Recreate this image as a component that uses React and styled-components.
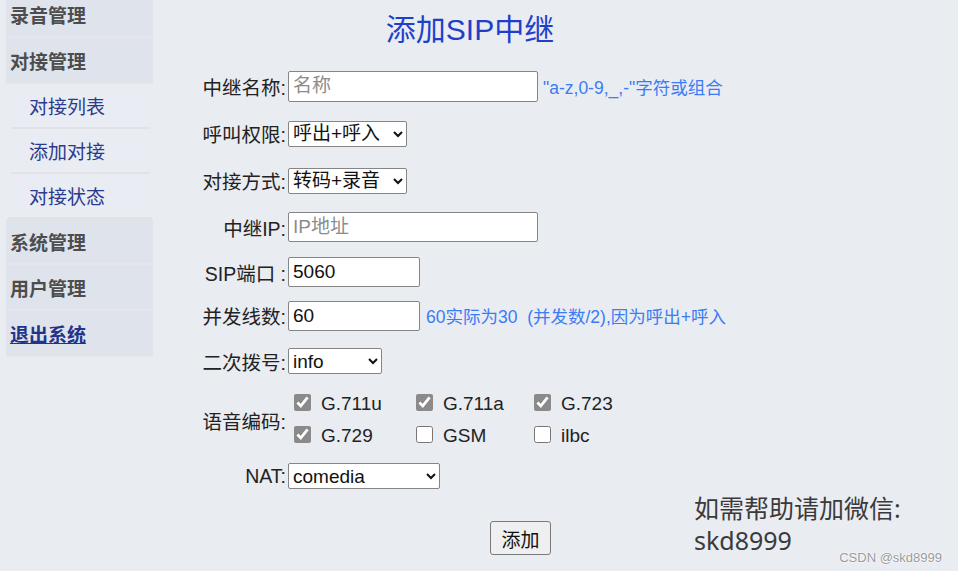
import React from 'react'
import styled, { createGlobalStyle } from 'styled-components'

const Global = createGlobalStyle`
  html, body {
    margin: 0;
    padding: 0;
    background: #e9ecf1;
    font-family: "Liberation Sans", "Noto Sans CJK SC", sans-serif;
    color: #222;
  }
`

const Page = styled.div`
  position: relative;
  display: flex;
  align-items: flex-start;
  width: 958px;
  height: 571px;
  overflow: hidden;
`

// ---------------- sidebar

const Side = styled.div`
  flex-shrink: 0;
  width: 147px;
  margin-left: 6px;
  margin-top: -8px;
  display: flex;
  flex-direction: column;
`

const Head = styled.a`
  display: flex;
  align-items: center;
  height: 44px;
  padding-left: 4px;
  background: #dfe4ec;
  border-bottom: 2px solid #e6e6e8;
  font-size: 19px;
  font-weight: bold;
  color: ${p => (p.$link ? '#24338a' : '#4d4d4d')};
  text-decoration: ${p => (p.$link ? 'underline' : 'none')};
  font-family: "Noto Sans CJK SC", sans-serif;
`

const SubList = styled.div`
  margin: 0 1px 0 2px;
  background: #e9ecf2;
  display: flex;
  flex-direction: column;
  border-bottom: 2px solid #e3e3e3;
`

const SubItem = styled.a`
  display: flex;
  align-items: center;
  height: 43px;
  margin: 0 2px 0 3px;
  padding-left: 18px;
  border-bottom: ${p => (p.$last ? '0' : '2px solid #e2e3e6')};
  font-size: 19px;
  color: #2b3a8c;
  font-family: "Noto Sans CJK SC", sans-serif;
`

// ---------------- form

const Main = styled.div`
  flex-shrink: 0;
  margin-left: 47px;
  width: 750px;
  display: flex;
  flex-direction: column;
`

const Title = styled.h1`
  margin: 0;
  padding-top: 12px;
  width: 540px;
  line-height: 36px;
  text-align: center;
  font-size: 30px;
  font-weight: normal;
  color: #1f3fc9;
`

const Form = styled.div`
  margin-top: 14px;
  display: flex;
  flex-direction: column;
`

const Row = styled.div`
  display: flex;
  align-items: center;
  height: ${p => p.$h}px;
`

const Label = styled.label`
  flex-shrink: 0;
  width: 86px;
  margin-right: 2px;
  text-align: right;
  font-size: 19.5px;
  white-space: nowrap;
  color: #222;
`

const TextInput = styled.input`
  flex-shrink: 0;
  box-sizing: border-box;
  width: ${p => p.$w}px;
  height: ${p => p.$hh || 30}px;
  padding: 0 4px;
  border: 1px solid #858585;
  border-radius: 2px;
  background: #fff;
  font-family: "Liberation Sans", "Noto Sans CJK SC", sans-serif;
  font-size: 19px;
  color: #111;
  &::placeholder {
    color: #8c8c8c;
  }
`

const Select = styled.select`
  flex-shrink: 0;
  box-sizing: border-box;
  width: ${p => p.$w}px;
  height: 26px;
  border: 1px solid #858585;
  border-radius: 2px;
  background: #fff;
  font-family: "Liberation Sans", "Noto Sans CJK SC", sans-serif;
  font-size: 19px;
  color: #111;
`

const Hint = styled.span`
  margin-left: ${p => p.$ml || 5}px;
  font-size: 17.5px;
  color: #3b7cf6;
  white-space: nowrap;
`

const Codecs = styled.div`
  display: grid;
  grid-template-columns: 122px 118px auto;
  grid-auto-rows: 32px;
`

const Codec = styled.label`
  display: flex;
  align-items: center;
  font-size: 19px;
  color: #222;
  input {
    width: 17px;
    height: 17px;
    margin: -3px 10px 0 6px;
    accent-color: #8a8a8a;
  }
`

const Footer = styled.div`
  display: flex;
  align-items: flex-start;
  margin-top: -5px;
`

const AddButton = styled.button`
  flex-shrink: 0;
  margin: 29px 0 0 290px;
  width: 61px;
  height: 34px;
  padding: 0;
  border: 1px solid #7a7a7a;
  border-radius: 3px;
  background: #efefef;
  font-family: "Noto Sans CJK SC", sans-serif;
  font-size: 19px;
  color: #111;
  white-space: nowrap;
`

const Help = styled.div`
  margin-left: 143px;
  line-height: 32px;
  font-family: "Noto Sans", "Noto Sans CJK SC", sans-serif;
  font-size: 25px;
  color: #3a3a3a;
  white-space: nowrap;
`

const Mark = styled.div`
  position: absolute;
  right: 16px;
  bottom: 6px;
  font-family: "Liberation Sans", sans-serif;
  font-size: 13px;
  color: #9b9b9b;
  text-shadow: 0 0 2px #fff, 0 0 2px #fff;
`

const codecs = [
  ['G.711u', true],
  ['G.711a', true],
  ['G.723', true],
  ['G.729', true],
  ['GSM', false],
  ['ilbc', false],
]

export default function App() {
  return (
    <Page>
      <Global />
      <Side>
        <Head>录音管理</Head>
        <Head>对接管理</Head>
        <SubList>
          <SubItem>对接列表</SubItem>
          <SubItem>添加对接</SubItem>
          <SubItem $last>对接状态</SubItem>
        </SubList>
        <Head>系统管理</Head>
        <Head>用户管理</Head>
        <Head $link>退出系统</Head>
      </Side>

      <Main>
        <Title>添加SIP中继</Title>
        <Form>
          <Row $h={48}>
            <Label>中继名称:</Label>
            <TextInput $w={250} $hh={31} placeholder="名称" />
            <Hint>"a-z,0-9,_,-"字符或组合</Hint>
          </Row>
          <Row $h={47}>
            <Label>呼叫权限:</Label>
            <Select $w={119} defaultValue="both">
              <option value="both">呼出+呼入</option>
            </Select>
          </Row>
          <Row $h={47}>
            <Label>对接方式:</Label>
            <Select $w={119} defaultValue="rec">
              <option value="rec">转码+录音</option>
            </Select>
          </Row>
          <Row $h={46}>
            <Label>中继IP:</Label>
            <TextInput $w={250} placeholder="IP地址" />
          </Row>
          <Row $h={44}>
            <Label>SIP端口 :</Label>
            <TextInput $w={132} defaultValue="5060" />
          </Row>
          <Row $h={43}>
            <Label>并发线数:</Label>
            <TextInput $w={132} defaultValue="60" />
            <Hint $ml={6}>60实际为30&nbsp;&nbsp;(并发数/2),因为呼出+呼入</Hint>
          </Row>
          <Row $h={48}>
            <Label>二次拨号:</Label>
            <Select $w={94} defaultValue="info">
              <option value="info">info</option>
            </Select>
          </Row>
          <Row $h={70}>
            <Label>语音编码:</Label>
            <Codecs>
              {codecs.map(([name, on]) => (
                <Codec key={name}>
                  <input type="checkbox" defaultChecked={on} />
                  {name}
                </Codec>
              ))}
            </Codecs>
          </Row>
          <Row $h={42}>
            <Label>NAT:</Label>
            <Select $w={152} defaultValue="comedia">
              <option value="comedia">comedia</option>
            </Select>
          </Row>
        </Form>
        <Footer>
          <AddButton>添加</AddButton>
          <Help>
            如需帮助请加微信:
            <br />
            skd8999
          </Help>
        </Footer>
      </Main>
      <Mark>CSDN @skd8999</Mark>
    </Page>
  )
}
